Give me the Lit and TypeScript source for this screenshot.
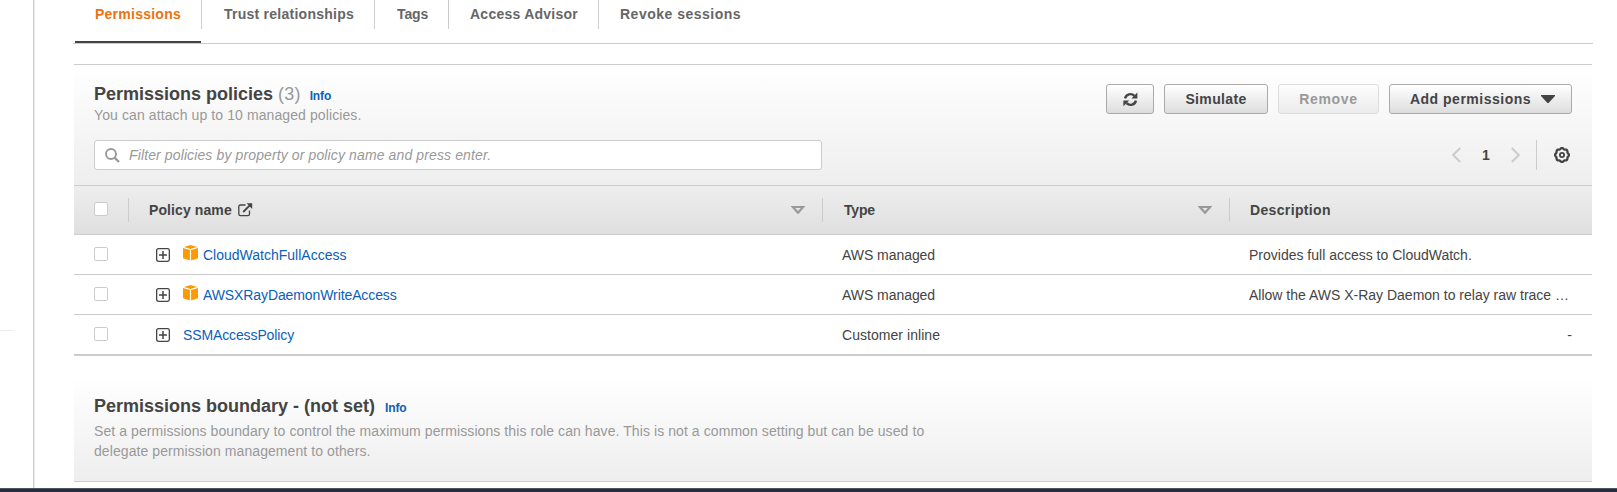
import { LitElement, html, css, svg } from "lit";
import { customElement } from "lit/decorators.js";

const refreshIcon = svg`<path d="M2 6.4A5.6 5.6 0 0 1 11.4 3.8" fill="none" stroke="#444" stroke-width="2.4"/><path d="M14.4 0.6V6.4H8.4Z" fill="#444"/><path d="M13 8.6A5.6 5.6 0 0 1 3.6 11.2" fill="none" stroke="#444" stroke-width="2.4"/><path d="M0.4 14.2V8.6H6.2Z" fill="#444"/>`;

const gearPath = (() => {
  const points: string[] = [];
  for (let i = 0; i <= 96; i++) {
    const a = (i / 96) * Math.PI * 2;
    const r = 6.5 + 0.45 * Math.cos(8 * a);
    points.push(`${(8 + r * Math.cos(a)).toFixed(2)} ${(8 + r * Math.sin(a)).toFixed(2)}`);
  }
  return `M${points.join("L")}Z`;
})();

interface Policy {
  name: string;
  aws: boolean;
  type: string;
  description: string;
}

const policies: Policy[] = [
  { name: "CloudWatchFullAccess", aws: true, type: "AWS managed", description: "Provides full access to CloudWatch." },
  { name: "AWSXRayDaemonWriteAccess", aws: true, type: "AWS managed", description: "Allow the AWS X-Ray Daemon to relay raw trace …" },
  { name: "SSMAccessPolicy", aws: false, type: "Customer inline", description: "" },
];

@customElement("app-root")
export class AppRoot extends LitElement {
  static styles = css`
    :host { display: block; width: 1617px; height: 492px; overflow: hidden; background: #fff; color: #444; font: 14px/20px "Liberation Sans", Arial, sans-serif; }
    * { box-sizing: border-box; }
    svg { display: block; flex: none; }
    .page { display: flex; height: 488px; }
    .side { width: 35px; border-right: 1px solid #eaeded; box-shadow: inset -1px 0 #ccc; padding-top: 330px; flex: none; }
    .side-rule { width: 13px; height: 1px; background: #eaeded; }
    .main { width: 1520px; margin-left: 38px; }
    .tabs { display: flex; height: 44px; border-bottom: 1px solid #ccc; font-weight: bold; letter-spacing: 0.25px; color: #666; }
    .tab { height: 29px; padding: 4px 0 0 22px; border-right: 1px solid #ccc; white-space: nowrap; }
    .tab.trust { width: 173px; }
    .tab.tags { width: 74px; letter-spacing: -0.1px; }
    .tab.advisor { width: 150px; padding-left: 21px; }
    .tab.last { border: 0; padding-left: 21px; letter-spacing: 0.5px; }
    .tab.active { height: 43px; width: 129px; padding: 0; display: flex; flex-direction: column; color: #ec7211; border: 0; }
    .tab.active .label { height: 29px; padding: 4px 0 0 22px; border-right: 1px solid #ccc; }
    .tab.active .bar { width: 126px; height: 2px; margin: 12px 0 0 2px; background: #444; }
    .panel { width: 1518px; margin: 20px 0 0 1px; border-top: 1px solid #ccc; }
    .head { height: 120px; padding: 19px 20px 0; background: linear-gradient(#fff, #eee); }
    .top { display: flex; justify-content: space-between; height: 56px; }
    .titles { margin-top: -1px; }
    .title { display: flex; align-items: baseline; font-size: 18px; line-height: 22px; font-weight: bold; }
    .count { font-weight: normal; color: #999; margin-left: 5px; letter-spacing: 0.2px; }
    .info { font-size: 12px; color: #0b60b8; margin-left: 10px; letter-spacing: -0.15px; }
    .count + .info { margin-left: 9px; }
    .sub { color: #999; letter-spacing: 0.1px; margin-top: -2px; }
    .buttons { display: flex; gap: 10px; }
    .btn { display: flex; align-items: center; justify-content: center; height: 30px; border: 1px solid #aaa; border-radius: 3px; background: linear-gradient(#fff, #ddd); font-weight: bold; letter-spacing: 0.5px; }
    .refresh { width: 48px; }
    .simulate { width: 104px; letter-spacing: 0.35px; }
    .remove { width: 101px; color: #999; border-color: #ddd; background: linear-gradient(#fdfdfd, #ebebeb); letter-spacing: 0.7px; }
    .add { width: 183px; gap: 10px; padding-left: 4px; }
    .tools { display: flex; justify-content: space-between; align-items: center; height: 30px; }
    .search { display: flex; align-items: center; gap: 9px; width: 728px; height: 30px; padding-left: 10px; background: #fff; border: 1px solid #ccc; border-radius: 3px; font-style: italic; color: #999; letter-spacing: 0.12px; }
    .pager { display: flex; align-items: center; height: 30px; margin-right: 2px; font-weight: bold; }
    .page-no { width: 50px; text-align: center; }
    .settings { display: flex; align-items: center; height: 30px; margin-left: 16px; padding-left: 17px; border-left: 1px solid #ccc; }
    .row { display: grid; grid-template-columns: 54px 694px 407px 363px; height: 40px; border-bottom: 1px solid #ccc; align-items: center; }
    .row.final { height: 41px; border-bottom-width: 2px; }
    .row.header { height: 50px; border-top: 1px solid #ccc; background: linear-gradient(#eee, #dfdfdf); font-weight: bold; letter-spacing: 0.1px; }
    .box { width: 14px; height: 14px; margin-left: 20px; margin-top: -1px; border: 1px solid #ccc; border-radius: 2px; background: #fff; }
    .header .box { margin-top: -2px; }
    .hcell { display: flex; align-items: center; height: 24px; border-left: 1px solid #ccc; padding: 0 17px 0 20px; }
    .hcell.type { padding-left: 21px; letter-spacing: -0.2px; }
    .hcell.desc { letter-spacing: 0.35px; }
    .grow { flex: 1; }
    .ext { margin-left: 6px; }
    .cell { padding-left: 20px; white-space: nowrap; margin-right: 20px; }
    .cell.kind { letter-spacing: -0.05px; }
    .cell.final-kind { letter-spacing: 0.05px; }
    .none { text-align: right; }
    .name { display: flex; align-items: center; padding-left: 28px; color: #0b60b8; }
    .cube { margin: -4px 5px 0 13px; }
    .plain { margin-left: 13px; letter-spacing: -0.12px; }
    .long { letter-spacing: -0.1px; }
    .boundary { width: 1518px; height: 106px; margin: 20px 0 0 1px; padding: 19px 20px 0; background: linear-gradient(#fff, #eee); border-bottom: 1px solid #ccc; }
    .hint { width: 850px; margin-top: 2px; color: #999; letter-spacing: 0.08px; }
    .footer { height: 4px; background: #232f3e; border-top: 1px solid #4a535f; }
  `;

  private box() {
    return html`<div class="box"></div>`;
  }

  private sortIcon() {
    return html`<svg width="14" height="8" viewBox="0 0 14 8"><path d="M0 0H14V0.6L7.4 8H6.6L0 0.6Z" fill="#999"/><path d="M4.2 2.1H9.8L7 5.1Z" fill="#e8e8e8"/></svg>`;
  }

  private row(p: Policy, last: boolean) {
    return html`<div class="row ${last ? "final" : ""}">
      ${this.box()}
      <div class="name">
        <svg width="14" height="14" viewBox="0 0 14 14"><rect x="0.65" y="0.65" width="12.7" height="12.7" rx="1.8" fill="none" stroke="#444" stroke-width="1.3"/><path d="M7 3V11M3 7H11" stroke="#444" stroke-width="1.5"/></svg>
        ${p.aws
          ? html`<svg class="cube" width="15" height="16" viewBox="0 0 15 16"><path d="M7.5 0L14 1.9L7.5 4L1 1.9Z M0 3L6.9 5.1V15.5L0 13.2Z M15 3L8.1 5.1V15.5L15 13.2Z" fill="#f90"/></svg><span class=${p.name.length > 20 ? "long" : ""}>${p.name}</span>`
          : html`<span class="plain">${p.name}</span>`}
      </div>
      <div class="cell ${last ? "final-kind" : "kind"}">${p.type}</div>
      <div class="cell ${p.description ? "" : "none"}">${p.description || "-"}</div>
    </div>`;
  }

  render() {
    return html`
      <div class="page">
        <div class="side"><div class="side-rule"></div></div>
        <div class="main">
          <div class="tabs">
            <div class="tab active"><div class="label">Permissions</div><div class="bar"></div></div>
            <div class="tab trust">Trust relationships</div>
            <div class="tab tags">Tags</div>
            <div class="tab advisor">Access Advisor</div>
            <div class="tab last">Revoke sessions</div>
          </div>
          <div class="panel">
            <div class="head">
              <div class="top">
                <div class="titles">
                  <div class="title">Permissions policies<span class="count">(3)</span><span class="info">Info</span></div>
                  <div class="sub">You can attach up to 10 managed policies.</div>
                </div>
                <div class="buttons">
                  <div class="btn refresh"><svg width="15" height="15" viewBox="0 0 15 15">${refreshIcon}</svg></div>
                  <div class="btn simulate">Simulate</div>
                  <div class="btn remove">Remove</div>
                  <div class="btn add">Add permissions<svg width="14" height="8" viewBox="0 0 14 8"><path d="M0 0H14V1L7.6 8H6.4L0 1Z" fill="#444"/></svg></div>
                </div>
              </div>
              <div class="tools">
                <div class="search"><svg width="15" height="15" viewBox="0 0 15 15"><circle cx="6" cy="6" r="5" fill="none" stroke="#999" stroke-width="1.9"/><path d="M9.6 9.6L14 14" stroke="#999" stroke-width="2.2"/></svg>Filter policies by property or policy name and press enter.</div>
                <div class="pager">
                  <svg width="9" height="16" viewBox="0 0 9 16"><path d="M8.2 1L1.2 8L8.2 15" fill="none" stroke="#ccc" stroke-width="2"/></svg>
                  <span class="page-no">1</span>
                  <svg width="9" height="16" viewBox="0 0 9 16"><path d="M0.8 1L7.8 8L0.8 15" fill="none" stroke="#ccc" stroke-width="2"/></svg>
                  <div class="settings"><svg width="16" height="16" viewBox="0 0 16 16"><path d=${gearPath} fill="none" stroke="#444" stroke-width="2.3"/><circle cx="8" cy="8" r="2.1" fill="none" stroke="#444" stroke-width="1.8"/></svg></div>
                </div>
              </div>
            </div>
            <div class="row header">
              ${this.box()}
              <div class="hcell">Policy name<svg class="ext" width="15" height="14" viewBox="0 0 15 14"><path d="M7.5 2H2.4Q0.8 2 0.8 3.6V11Q0.8 12.6 2.4 12.6H9.9Q11.5 12.6 11.5 11V7.6" fill="none" stroke="#444" stroke-width="1.3"/><path d="M5.2 9L12 2.2" stroke="#444" stroke-width="1.8"/><path d="M8.6 0.3H14.2V5.9Z" fill="#444"/></svg><span class="grow"></span>${this.sortIcon()}</div>
              <div class="hcell type">Type<span class="grow"></span>${this.sortIcon()}</div>
              <div class="hcell desc">Description</div>
            </div>
            ${policies.map((p, i) => this.row(p, i === policies.length - 1))}
          </div>
          <div class="boundary">
            <div class="title">Permissions boundary - (not set)<span class="info">Info</span></div>
            <div class="hint">Set a permissions boundary to control the maximum permissions this role can have. This is not a common setting but can be used to delegate permission management to others.</div>
          </div>
        </div>
      </div>
      <div class="footer"></div>
    `;
  }
}
